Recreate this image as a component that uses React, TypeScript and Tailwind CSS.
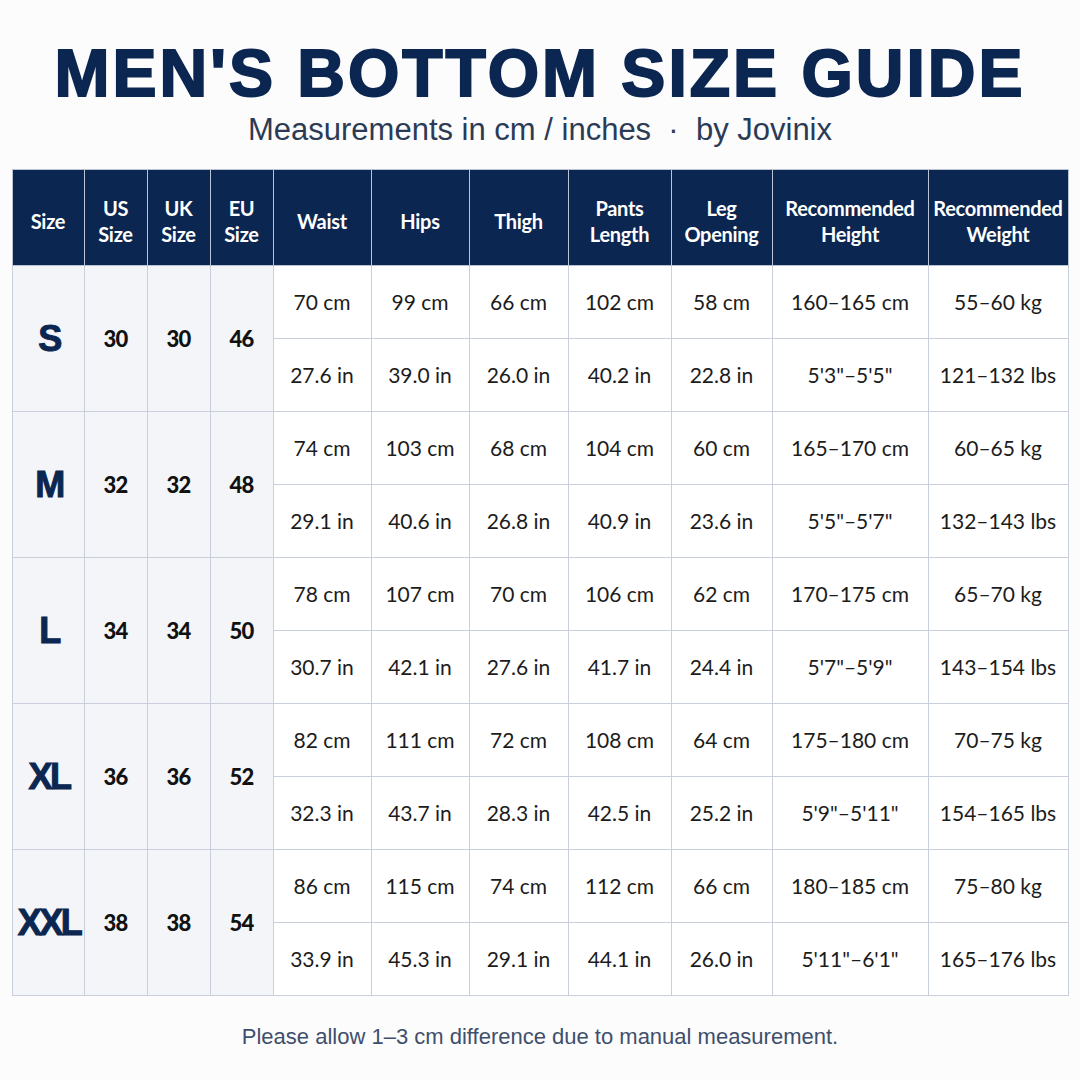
import React from "react";

type SizeRow = {
  size: string;
  us: string;
  uk: string;
  eu: string;
  cm: string[];
  inch: string[];
};

const COLUMNS = [
  { label: ["Size"], w: "w-[72px]" },
  { label: ["US", "Size"], w: "w-[63px]" },
  { label: ["UK", "Size"], w: "w-[63px]" },
  { label: ["EU", "Size"], w: "w-[63px]" },
  { label: ["Waist"], w: "w-[98px]" },
  { label: ["Hips"], w: "w-[98px]" },
  { label: ["Thigh"], w: "w-[99px]" },
  { label: ["Pants", "Length"], w: "w-[103px]" },
  { label: ["Leg", "Opening"], w: "w-[101px]" },
  { label: ["Recommended", "Height"], w: "w-[156px]" },
  { label: ["Recommended", "Weight"], w: "w-[140px]" },
];

const ROWS: SizeRow[] = [
  {
    size: "S", us: "30", uk: "30", eu: "46",
    cm: ["70 cm", "99 cm", "66 cm", "102 cm", "58 cm", "160–165 cm", "55–60 kg"],
    inch: ["27.6 in", "39.0 in", "26.0 in", "40.2 in", "22.8 in", "5'3\"–5'5\"", "121–132 lbs"],
  },
  {
    size: "M", us: "32", uk: "32", eu: "48",
    cm: ["74 cm", "103 cm", "68 cm", "104 cm", "60 cm", "165–170 cm", "60–65 kg"],
    inch: ["29.1 in", "40.6 in", "26.8 in", "40.9 in", "23.6 in", "5'5\"–5'7\"", "132–143 lbs"],
  },
  {
    size: "L", us: "34", uk: "34", eu: "50",
    cm: ["78 cm", "107 cm", "70 cm", "106 cm", "62 cm", "170–175 cm", "65–70 kg"],
    inch: ["30.7 in", "42.1 in", "27.6 in", "41.7 in", "24.4 in", "5'7\"–5'9\"", "143–154 lbs"],
  },
  {
    size: "XL", us: "36", uk: "36", eu: "52",
    cm: ["82 cm", "111 cm", "72 cm", "108 cm", "64 cm", "175–180 cm", "70–75 kg"],
    inch: ["32.3 in", "43.7 in", "28.3 in", "42.5 in", "25.2 in", "5'9\"–5'11\"", "154–165 lbs"],
  },
  {
    size: "XXL", us: "38", uk: "38", eu: "54",
    cm: ["86 cm", "115 cm", "74 cm", "112 cm", "66 cm", "180–185 cm", "75–80 kg"],
    inch: ["33.9 in", "45.3 in", "29.1 in", "44.1 in", "26.0 in", "5'11\"–6'1\"", "165–176 lbs"],
  },
];

export default function App() {
  return (
    <div className="w-[1080px] h-[1080px] bg-[#fcfcfd] flex flex-col items-center pt-[40px]">
      {/* Title block */}
      <h1 className="font-['Liberation_Sans',Arial,sans-serif] font-bold text-[66px] leading-none tracking-[3px] text-[#0b2650] [-webkit-text-stroke:2px_#0b2650]">
        MEN'S BOTTOM SIZE GUIDE
      </h1>
      <p className="mt-[8px] font-['Liberation_Sans',Arial,sans-serif] text-[31px] leading-none text-[#2c3b55]">
        Measurements in cm / inches&nbsp;&nbsp;·&nbsp;&nbsp;by Jovinix
      </p>

      {/* Size table */}
      <table className="mt-[24px] table-fixed border-collapse font-['Lato',sans-serif] w-[1056px]">
        <colgroup>
          {COLUMNS.map((c, i) => (
            <col key={i} className={c.w} />
          ))}
        </colgroup>
        <thead>
          <tr className="h-[96px] bg-[#0b2650]">
            {COLUMNS.map((c, i) => (
              <th
                key={i}
                className="border border-[#b9c3d3] text-white font-bold text-[20px] leading-[26px] tracking-[-0.3px] text-center align-middle px-0 pt-[6px]"
              >
                {c.label.map((l, j) => (
                  <div key={j}>{l}</div>
                ))}
              </th>
            ))}
          </tr>
        </thead>
        <tbody>
          {ROWS.map((r) => (
            <React.Fragment key={r.size}>
              <tr className="h-[73px]">
                <td
                  rowSpan={2}
                  className="border border-[#c9d0dc] bg-[#f3f5f8] text-center align-middle font-['Liberation_Sans',Arial,sans-serif] font-bold text-[36px] tracking-[-2.5px] pl-[2px] text-[#0b2650] [-webkit-text-stroke:1px_#0b2650]"
                >
                  {r.size}
                </td>
                {[r.us, r.uk, r.eu].map((v, i) => (
                  <td
                    key={i}
                    rowSpan={2}
                    className="border border-[#c9d0dc] bg-[#f3f5f8] text-center align-middle font-black text-[22px] tracking-[-0.8px] text-[#111111]"
                  >
                    {v}
                  </td>
                ))}
                {r.cm.map((v, i) => (
                  <td
                    key={i}
                    className="border border-[#c9d0dc] bg-white text-center align-middle text-[21px] text-[#1c1c1c]"
                  >
                    {v}
                  </td>
                ))}
              </tr>
              <tr className="h-[73px]">
                {r.inch.map((v, i) => (
                  <td
                    key={i}
                    className="border border-[#c9d0dc] bg-white text-center align-middle text-[21px] text-[#1c1c1c]"
                  >
                    {v}
                  </td>
                ))}
              </tr>
            </React.Fragment>
          ))}
        </tbody>
      </table>

      <p className="mt-[30px] font-['Liberation_Sans',Arial,sans-serif] text-[22px] leading-none text-[#3f4f6b]">
        Please allow 1–3 cm difference due to manual measurement.
      </p>
    </div>
  );
}
